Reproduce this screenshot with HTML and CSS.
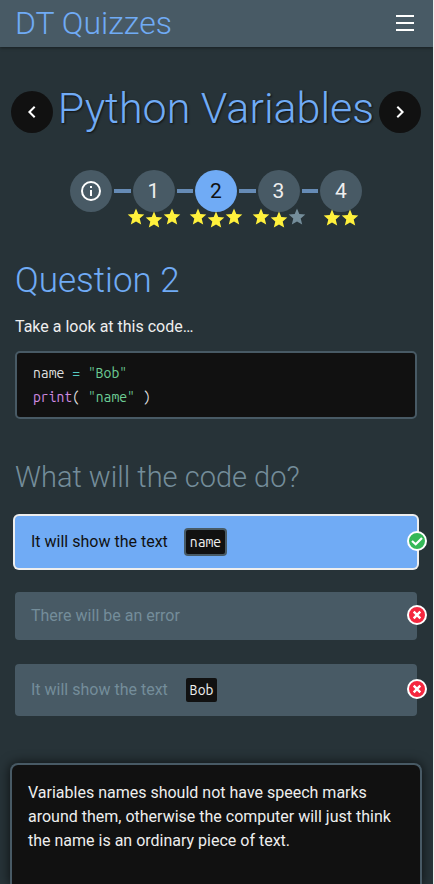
FILE: index.html
```html
<!DOCTYPE html>
<html lang="en">
<head>
<meta charset="utf-8">
<meta name="viewport" content="width=device-width, initial-scale=1">
<title>DT Quizzes</title>
<link rel="stylesheet" href="styles.css">
</head>
<body>
<svg class="defs" aria-hidden="true">
  <symbol id="star" viewBox="0 0 18 18"><path d="M9 .6l2.300 5.500 6 .5-4.600 3.900 1.500 6L9 13.400l-5.200 3.100 1.500-6L.7 6.600l6-.5z"/></symbol>
  <symbol id="cross" viewBox="0 0 16 16"><path d="M4.700 4.700l6.600 6.600M11.300 4.700l-6.600 6.600" fill="none" stroke="#fff" stroke-width="2.400"/></symbol>
</svg>
<header class="topbar">
  <a class="brand" href="#">DT Quizzes</a>
  <button class="menu" type="button" aria-label="Menu">
    <svg width="18" height="16" viewBox="0 0 18 16"><path d="M0 1h18M0 8h18M0 15h18" stroke="#fff" stroke-width="2"/></svg>
  </button>
</header>
<main>
  <div class="title-row">
    <button class="round" type="button" aria-label="Previous quiz">
      <svg width="24" height="24" viewBox="0 0 24 24"><path d="M14.700 6.700l-5.300 5.300 5.300 5.300" fill="none" stroke="#fff" stroke-width="2"/></svg>
    </button>
    <h1>Python Variables</h1>
    <button class="round" type="button" aria-label="Next quiz">
      <svg width="24" height="24" viewBox="0 0 24 24"><path d="M9.300 6.700l5.300 5.300-5.300 5.300" fill="none" stroke="#fff" stroke-width="2"/></svg>
    </button>
  </div>
  <nav class="steps" aria-label="Questions">
    <a class="step" href="#" aria-label="Information">
      <svg width="24" height="24" viewBox="0 0 24 24"><circle cx="12" cy="12" r="9" fill="none" stroke="#fff" stroke-width="2"/><path d="M11 7h2v2h-2zM11 11h2v6h-2z" fill="#fff"/></svg>
    </a>
    <span class="link"></span>
    <a class="step" href="#">1<span class="stars"><svg><use href="#star"/></svg><svg class="low"><use href="#star"/></svg><svg><use href="#star"/></svg></span></a>
    <span class="link"></span>
    <a class="step current" href="#" aria-current="step">2<span class="stars"><svg><use href="#star"/></svg><svg class="low"><use href="#star"/></svg><svg><use href="#star"/></svg></span></a>
    <span class="link"></span>
    <a class="step" href="#">3<span class="stars"><svg><use href="#star"/></svg><svg class="low"><use href="#star"/></svg><svg class="empty"><use href="#star"/></svg></span></a>
    <span class="link"></span>
    <a class="step" href="#">4<span class="stars pair"><svg><use href="#star"/></svg><svg><use href="#star"/></svg></span></a>
  </nav>
  <section class="question">
    <h2>Question 2</h2>
    <p>Take a look at this code…</p>
    <pre><code>name <span class="op">=</span> <span class="str">"Bob"</span>
<span class="fn">print</span>( <span class="str">"name"</span> )</code></pre>
    <h3>What will the code do?</h3>
    <div class="answers">
      <button class="answer chosen" type="button">It will show the text <code>name</code>
        <svg class="mark right" viewBox="0 0 16 16"><path d="M3 8l3.700 3.300L13 5" fill="none" stroke="#fff" stroke-width="2.200"/></svg>
      </button>
      <button class="answer" type="button">There will be an error
        <svg class="mark"><use href="#cross"/></svg>
      </button>
      <button class="answer" type="button">It will show the text <code>Bob</code>
        <svg class="mark"><use href="#cross"/></svg>
      </button>
    </div>
  </section>
</main>
<aside class="feedback">
  <p>Variables names should not have speech marks around them, otherwise the computer will just think the name is an ordinary piece of text.</p>
</aside>
</body>
</html>
```

FILE: styles.css
```css
:root {
  --page: #273338;
  --slate: #485a65;
  --blue: #70abf5;
  --muted: #748d9a;
  --ink: #111;
  --text: #eee;
}

* { box-sizing: border-box; }

html { background: #eee; }

body {
  display: flex;
  flex-direction: column;
  min-height: 100vh;
  margin: 0 1px 0 0;
  background: var(--page);
  color: var(--text);
  font: 16px/24px Roboto, sans-serif;
}

button { font: inherit; cursor: pointer; }
a { text-decoration: none; }
h1, h2, h3, p, pre { margin: 0; }
h1, h2, h3 { font-weight: 300; }

.defs { position: absolute; width: 0; height: 0; }

.topbar {
  display: flex;
  align-items: center;
  justify-content: space-between;
  height: 47px;
  padding: 0 16px 1px 15px;
  background: var(--slate);
  box-shadow: 0 1px 3px rgba(0, 0, 0, .4);
}

.brand {
  color: var(--blue);
  font-size: 32px;
  font-weight: 300;
  line-height: 44px;
}

.menu {
  display: flex;
  padding: 3px;
  border: 0;
  background: none;
}

.title-row {
  display: flex;
  align-items: center;
  justify-content: space-between;
  margin: 35px 12px 0 11px;
}

.round {
  display: flex;
  flex: none;
  align-items: center;
  justify-content: center;
  width: 42px;
  height: 42px;
  padding: 0;
  border: 0;
  border-radius: 50%;
  background: var(--ink);
}

h1 {
  padding-bottom: 8px;
  color: var(--blue);
  font-size: 43px;
  line-height: 52px;
  white-space: nowrap;
  text-shadow: 1px 1px 2px #111;
}

.steps {
  display: flex;
  align-items: center;
  width: 293px;
  margin: 28px auto 0;
  padding-right: 1px;
}

.step {
  position: relative;
  display: flex;
  flex: none;
  align-items: center;
  justify-content: center;
  width: 42px;
  height: 42px;
  border-radius: 50%;
  background: var(--slate);
  color: var(--text);
  font-size: 21px;
}

.current { background: var(--blue); color: var(--ink); }

.link {
  flex: 1;
  height: 4px;
  margin: 0 2px;
  background: #668bb5;
}

.stars {
  position: absolute;
  top: 38px;
  left: 50%;
  display: flex;
  transform: translateX(-50%);
}

.stars svg {
  width: 18px;
  height: 18px;
  fill: #fff13c;
}

.stars .low { margin-top: 3px; }
.stars .empty { fill: var(--muted); }
.stars.pair { top: 39px; }

.question { padding: 0 16px 0 15px; }

h2 {
  margin-top: 45px;
  color: var(--blue);
  font-size: 35px;
  line-height: 48px;
}

.question p { margin-top: 10px; }

pre {
  margin-top: 12px;
  padding: 8px 16px;
  border: 2px solid var(--slate);
  border-radius: 5px;
  background: var(--ink);
}

code {
  font: 14px/24px "Ubuntu Mono", "Noto Sans Mono CJK SC", "DejaVu Sans Mono", monospace;
}

pre code { display: block; color: #ddd; }
.op { color: #56c8c0; }
.str { color: #6ccb94; }
.fn { color: #cf8be0; }

h3 {
  margin-top: 38px;
  color: var(--muted);
  font-size: 29px;
  line-height: 40px;
}

.answers {
  display: grid;
  gap: 24px;
  margin-top: 19px;
}

.answer {
  position: relative;
  display: flex;
  align-items: center;
  padding: 12px 16px;
  border: 0;
  border-radius: 4px;
  background: var(--slate);
  color: var(--muted);
  text-align: left;
}

.answer code {
  margin: 2px 0 2px 18px;
  padding: 0 4px;
  border-radius: 2px;
  background: var(--ink);
  color: var(--text);
}

.chosen {
  background: var(--blue);
  box-shadow: 0 0 0 2px var(--text);
  color: var(--ink);
}

.chosen code { box-shadow: 0 0 0 2px var(--slate); }

.mark {
  position: absolute;
  top: calc(50% - 11px);
  right: -10px;
  width: 20px;
  height: 20px;
  border: 2px solid #fff;
  border-radius: 50%;
  background: #f5273f;
}

.right { background: #35b858; }

.feedback {
  flex: 1;
  margin: 47px 11px 0 10px;
  padding: 16px 16px 32px;
  border: 2px solid var(--slate);
  border-bottom: 0;
  border-radius: 8px 8px 0 0;
  background: var(--ink);
  box-shadow: 0 0 12px rgba(0, 0, 0, .7);
}
```
